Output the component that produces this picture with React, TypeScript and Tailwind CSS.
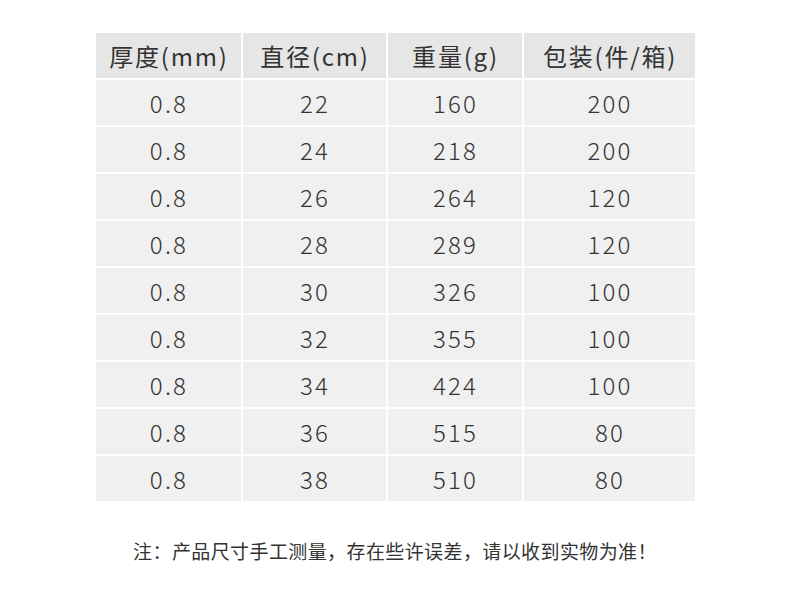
const rows = [
  ['0.8', '22', '160', '200'],
  ['0.8', '24', '218', '200'],
  ['0.8', '26', '264', '120'],
  ['0.8', '28', '289', '120'],
  ['0.8', '30', '326', '100'],
  ['0.8', '32', '355', '100'],
  ['0.8', '34', '424', '100'],
  ['0.8', '36', '515', '80'],
  ['0.8', '38', '510', '80'],
];

const headers = ['厚度(mm)', '直径(cm)', '重量(g)', '包装(件/箱)'];

export default function App() {
  return (
    <div
      className="w-[790px] h-[594px] bg-white text-[#333333] flex flex-col items-center"
      style={{ fontFamily: '"Noto Sans CJK SC", "Noto Sans", sans-serif' }}
    >
      <div className="mt-[33px] grid grid-cols-[145px_143px_134px_171px] gap-[2px] w-[599px]">
        {headers.map((h) => (
          <div key={h} className="h-[45px] bg-[#e6e6e6] flex items-center justify-center pl-[2px] text-[24px] leading-none tracking-[1.8px]">
            {h}
          </div>
        ))}
        {rows.map((r, i) =>
          r.map((c, j) => (
            <div key={`${i}-${j}`} className="h-[45px] bg-[#f0f0f0] flex items-center justify-center pl-[2px] text-[24px] leading-none font-light tracking-[2.2px]">
              {c}
            </div>
          ))
        )}
      </div>
      <p className="mt-[40px] text-[19px] leading-none tracking-[0.4px] text-[#333333]">
        注：产品尺寸手工测量，存在些许误差，请以收到实物为准！
      </p>
    </div>
  );
}
